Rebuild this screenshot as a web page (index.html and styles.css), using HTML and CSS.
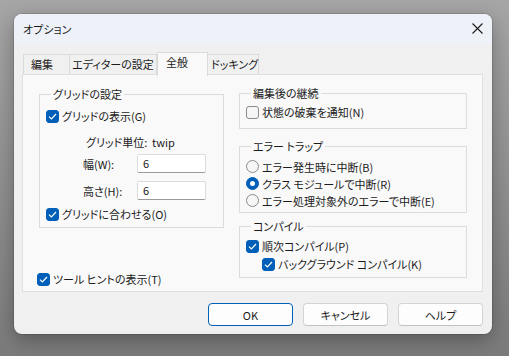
FILE: index.html
```html
<!DOCTYPE html>
<html lang="ja">
<head>
    <title>オプション</title>
    <link rel="stylesheet" href="styles.css">
</head>
<body>

    <div class="window">
        <div class="titlebar">
            <span class="title">オプション</span>
            <svg class="close" width="11" height="11" viewBox="0 0 11 11">
                <path d="M0.5 0.5 L10.5 10.5 M10.5 0.5 L0.5 10.5" stroke="#1a1a1a" stroke-width="1.1" fill="none"/>
            </svg>
        </div>

        <div class="content">
            <div class="tabs">
                <div class="tab tab-edit">編集</div>
                <div class="tab tab-editor">エディターの設定</div>
                <div class="tab tab-general selected">全般</div>
                <div class="tab tab-dock">ドッキング</div>
            </div>

            <div class="panel">
                <div class="col-left">
                    <fieldset class="group grid-group">
                        <legend>グリッドの設定</legend>
                        <div class="row">
                            <span class="box on"><svg width="9" height="7" viewBox="0 0 9 7"><path d="M1 3.6 L3.4 6 L8 1" stroke="#fff" stroke-width="1.2" fill="none"/></svg></span>
                            グリッドの表示(G)
                        </div>
                        <div class="unit-row">
                            <span class="unit-label">グリッド単位:</span>
                            <span>twip</span>
                        </div>
                        <div class="field-row first">
                            <span class="field-label">幅(W):</span>
                            <span class="input">6</span>
                        </div>
                        <div class="field-row second">
                            <span class="field-label">高さ(H):</span>
                            <span class="input">6</span>
                        </div>
                        <div class="row snap-row">
                            <span class="box on"><svg width="9" height="7" viewBox="0 0 9 7"><path d="M1 3.6 L3.4 6 L8 1" stroke="#fff" stroke-width="1.2" fill="none"/></svg></span>
                            グリッドに合わせる(O)
                        </div>
                    </fieldset>

                    <div class="row tooltip-row">
                        <span class="box on"><svg width="9" height="7" viewBox="0 0 9 7"><path d="M1 3.6 L3.4 6 L8 1" stroke="#fff" stroke-width="1.2" fill="none"/></svg></span>
                        ツール ヒントの表示(T)
                    </div>
                </div>

                <div class="col-right">
                    <fieldset class="group keep-group">
                        <legend>編集後の継続</legend>
                        <div class="row">
                            <span class="box"></span>
                            状態の破棄を通知(N)
                        </div>
                    </fieldset>

                    <fieldset class="group trap-group">
                        <legend>エラー トラップ</legend>
                        <div class="radio-row"><span class="radio"></span>エラー発生時に中断(B)</div>
                        <div class="radio-row"><span class="radio on"></span>クラス モジュールで中断(R)</div>
                        <div class="radio-row"><span class="radio"></span>エラー処理対象外のエラーで中断(E)</div>
                    </fieldset>

                    <fieldset class="group compile-group">
                        <legend>コンパイル</legend>
                        <div class="row">
                            <span class="box on"><svg width="9" height="7" viewBox="0 0 9 7"><path d="M1 3.6 L3.4 6 L8 1" stroke="#fff" stroke-width="1.2" fill="none"/></svg></span>
                            順次コンパイル(P)
                        </div>
                        <div class="row indent">
                            <span class="box on"><svg width="9" height="7" viewBox="0 0 9 7"><path d="M1 3.6 L3.4 6 L8 1" stroke="#fff" stroke-width="1.2" fill="none"/></svg></span>
                            バックグラウンド コンパイル(K)
                        </div>
                    </fieldset>
                </div>
            </div>

            <div class="buttons">
                <button class="btn default">OK</button>
                <button class="btn">キャンセル</button>
                <button class="btn">ヘルプ</button>
            </div>
        </div>
    </div>

</body>
</html>
```

FILE: styles.css
```css
html, body {
    margin: 0;
    height: 100%;
}
body {
    font-family: "Noto Sans CJK JP", "Noto Sans", sans-serif;
    font-size: 11px;
    font-feature-settings: "palt";
    color: #1b1b1b;
    background: linear-gradient(to bottom, #a6a6a6, #7b7b7b);
    padding: 14px 0 0 14px;
    box-sizing: border-box;
    overflow: hidden;
    white-space: nowrap;
}
.window {
    width: 478px;
    height: 320px;
    background-color: #f0f0f0;
    border-radius: 8px;
    overflow: hidden;
    box-shadow: 0 6px 20px rgba(0, 0, 0, 0.3), 0 0 0 1px rgba(0, 0, 0, 0.12);
    display: flex;
    flex-direction: column;
}
.titlebar {
    height: 30px;
    flex: none;
    background-color: #eef2f8;
    display: flex;
    align-items: center;
    justify-content: space-between;
    padding: 0 9px 1px 9px;
    box-sizing: border-box;
}
.title {
    line-height: 16px;
}
.close {
    display: block;
}
.content {
    padding: 8px 9px 0 8px;
}

/* tabs */
.tabs {
    display: flex;
    align-items: flex-end;
    padding-left: 1px;
    height: 22px;
}
.tab {
    height: 20px;
    line-height: 19px;
    box-sizing: border-box;
    border: 1px solid #dadada;
    border-bottom: none;
    padding-left: 7px;
    background-color: #f0f0f0;
}
.tab-edit { width: 47px; }
.tab-editor { width: 87px; border-left: none; padding-left: 0; text-align: center; }
.tab-general { width: 51px; }
.tab-dock { width: 51px; border-left: none; padding-left: 3px; }
.tab.selected {
    height: 24px;
    line-height: 19px;
    background-color: #f9f9f9;
    margin-bottom: -2px;
    position: relative;
    z-index: 1;
    padding-left: 8px;
}

/* panel */
.panel {
    height: 218px;
    box-sizing: border-box;
    background-color: #f9f9f9;
    border: 1px solid #dfdfdf;
    display: grid;
    grid-template-columns: 185px 228px;
    column-gap: 15px;
    padding: 10px 0 0 16px;
}
.group {
    margin: 0;
    border: 1px solid #dcdcdc;
    padding: 0 0 0 6px;
    min-width: 0;
}
.group legend {
    padding: 0 2px;
    margin-left: 5px;
    line-height: 16px;
}
.row {
    display: flex;
    align-items: center;
    height: 18px;
    gap: 3px;
    line-height: 16px;
}
.box {
    width: 13px;
    height: 13px;
    box-sizing: border-box;
    border-radius: 3px;
    border: 1px solid #8b8b8b;
    background-color: #f6f6f6;
    display: flex;
    align-items: center;
    justify-content: center;
    flex: none;
}
.box.on {
    background-color: #005fb8;
    border-color: #005fb8;
}
.box svg {
    display: block;
}

/* grid group */
.col-left {
    padding-top: 1px;
}
.grid-group {
    padding-top: 5px;
    padding-bottom: 4px;
}
.unit-row {
    margin: 9px 0 0 40px;
    height: 16px;
    line-height: 16px;
    display: flex;
}
.unit-label {
    width: 66px;
}
.field-row {
    display: flex;
    align-items: center;
    margin-left: 37px;
}
.field-row.first {
    margin-top: 4px;
}
.field-row.second {
    margin-top: 8px;
}
.field-label {
    width: 54px;
}
.input {
    width: 69px;
    height: 19px;
    box-sizing: border-box;
    background-color: #fff;
    border: 1px solid #dcdcdc;
    border-bottom-color: #9a9a9a;
    border-radius: 2px;
    padding-left: 5px;
    line-height: 17px;
}
.snap-row {
    margin-top: 5px;
}
.tooltip-row {
    margin: 42px 0 0 -2px;
}

/* right column */
.keep-group {
    padding-top: 2px;
    padding-bottom: 7px;
}
.trap-group {
    margin-top: 9px;
    padding-top: 4px;
    padding-bottom: 3px;
}
.compile-group {
    margin-top: 5px;
    padding-top: 3px;
    padding-bottom: 4px;
}
.radio-row {
    display: flex;
    align-items: center;
    height: 17px;
    gap: 3px;
    line-height: 16px;
}
.radio {
    width: 13px;
    height: 13px;
    box-sizing: border-box;
    border-radius: 50%;
    border: 1px solid #8b8b8b;
    background-color: #f6f6f6;
    flex: none;
    display: flex;
    align-items: center;
    justify-content: center;
}
.radio.on {
    background-color: #005fb8;
    border-color: #005fb8;
}
.radio.on::after {
    content: "";
    width: 5px;
    height: 5px;
    border-radius: 50%;
    background-color: #fff;
}
.indent {
    margin-left: 16px;
}

/* buttons */
.buttons {
    display: flex;
    justify-content: flex-end;
    gap: 10px;
    margin-top: 11px;
}
.btn {
    width: 85px;
    height: 23px;
    font-family: inherit;
    font-size: 11px;
    font-feature-settings: "palt";
    color: #1b1b1b;
    background-color: #fdfdfd;
    border: 1px solid #d4d4d4;
    border-bottom-color: #c2c2c2;
    border-radius: 4px;
    padding: 0;
}
.btn.default {
    border: 1px solid #005fb8;
}
```
